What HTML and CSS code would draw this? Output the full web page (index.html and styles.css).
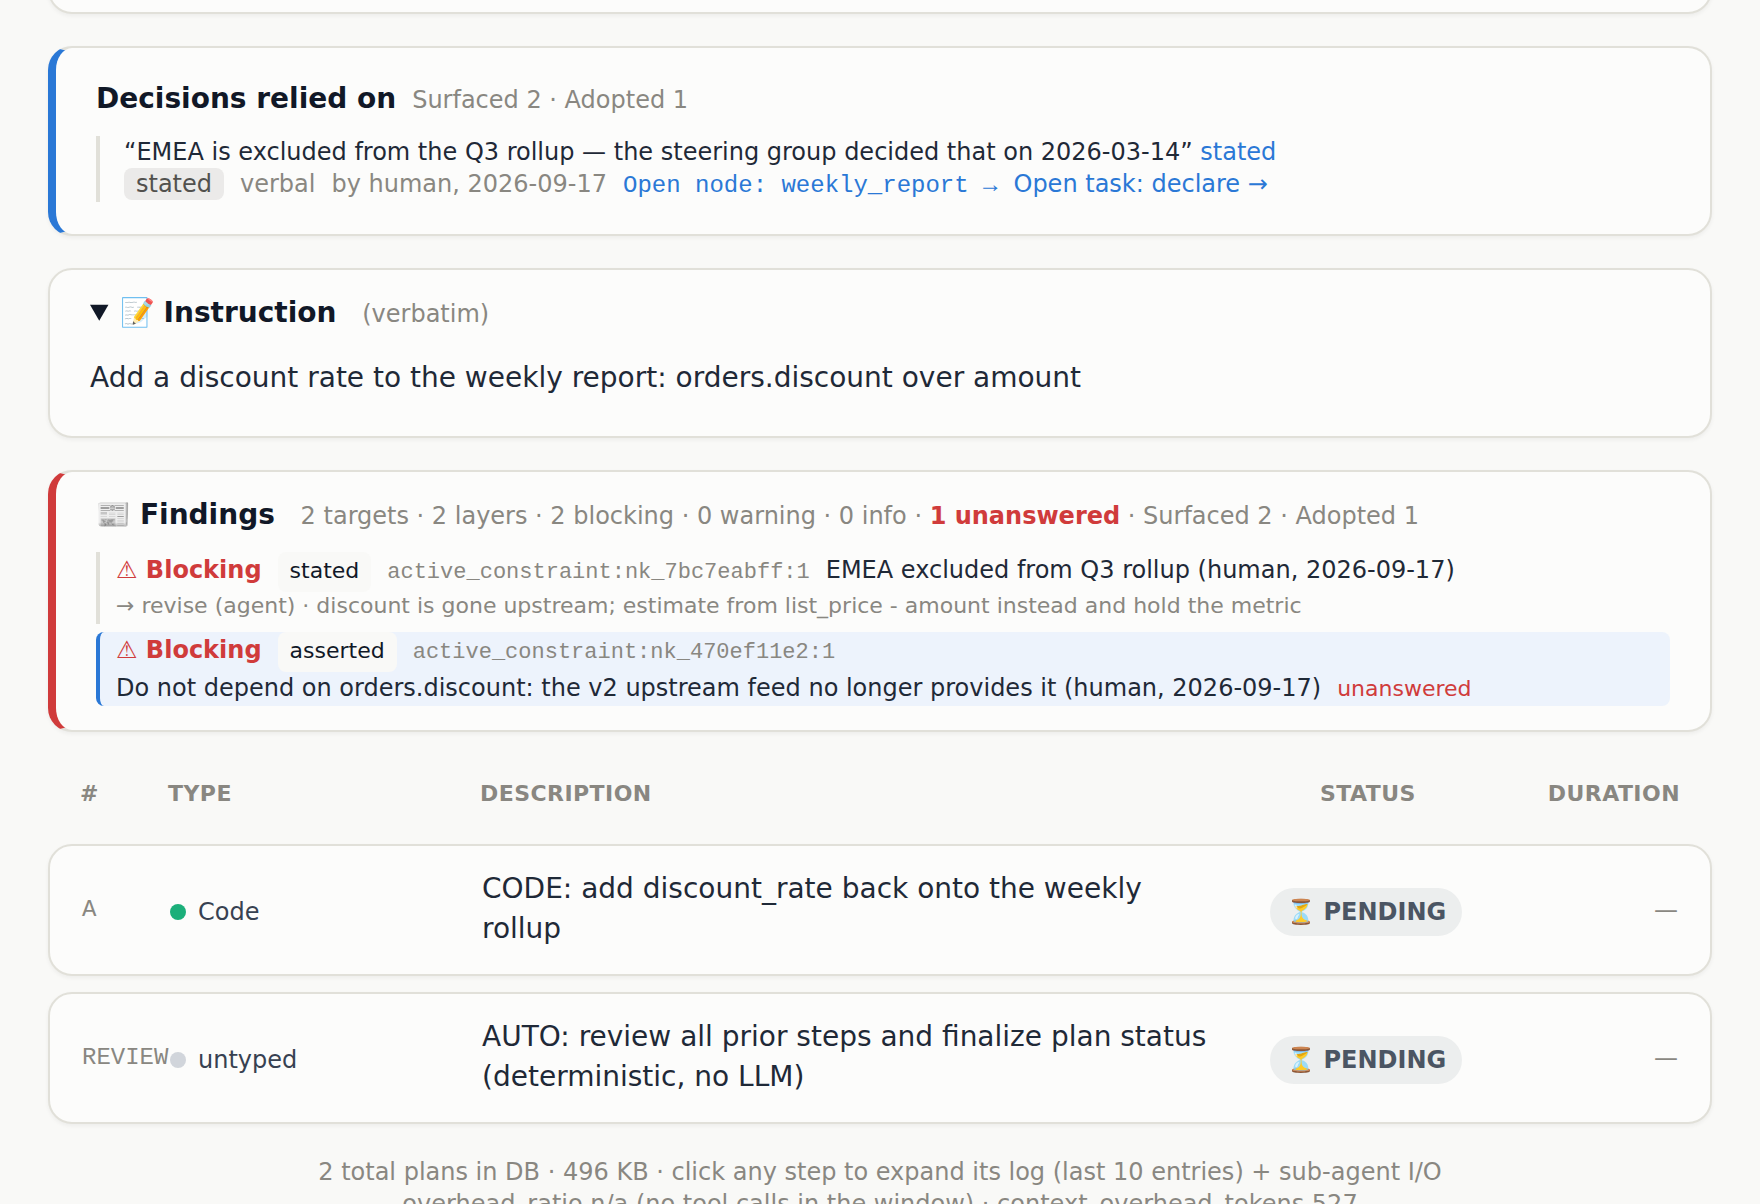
FILE: index.html
```html
<!DOCTYPE html>
<html lang="en">
<head>
<meta charset="utf-8">
<meta name="viewport" content="width=device-width, initial-scale=1">
<title>Plan</title>
<link rel="stylesheet" href="styles.css">
</head>
<body>
<main class="page">
  <section class="card card-previous"></section>

  <section class="card card-decisions">
    <header class="card-head"><h2 class="title">Decisions relied on</h2> <span class="muted head-note">Surfaced 2 · Adopted 1</span></header>
    <div class="decision">
      <p class="quote">“EMEA is excluded from the Q3 rollup — the steering group decided that on 2026-03-14” <a href="#stated">stated</a></p>
      <div class="decision-meta muted">
        <span class="tag">stated</span>
        <span>verbal</span>
        <span>by human, 2026-09-17</span>
        <a class="mono" href="#weekly_report">Open node: weekly_report →</a>
        <a href="#declare">Open task: declare →</a>
      </div>
    </div>
  </section>

  <details class="card card-instruction" open>
    <summary class="summary"><h2 class="title"><span class="emoji">📝 </span>Instruction </h2><span class="muted head-meta">(verbatim)</span></summary>
    <p class="instruction">Add a discount rate to the weekly report: orders.discount over amount</p>
  </details>

  <section class="card card-findings">
    <header class="card-head"><h2 class="title"><span class="emoji">📰 </span>Findings </h2><span class="muted head-meta">2 targets · 2 layers · 2 blocking · 0 warning · 0 info · <strong class="alert">1 unanswered</strong> · Surfaced 2 · Adopted 1</span></header>
    <ul class="findings">
      <li class="finding">
        <strong class="alert">⚠ Blocking</strong>
        <span class="level">stated</span>
        <code class="mono source">active_constraint:nk_7bc7eabff:1</code>
        <span>EMEA excluded from Q3 rollup (human, 2026-09-17)</span>
        <span class="answer">→ revise (agent) · discount is gone upstream; estimate from list_price - amount instead and hold the metric</span>
      </li>
      <li class="finding finding-open">
        <strong class="alert">⚠ Blocking</strong>
        <span class="level">asserted</span>
        <code class="mono source">active_constraint:nk_470ef11e2:1</code>
        <span>Do not depend on orders.discount: the v2 upstream feed no longer provides it (human, 2026-09-17)</span>
        <span class="alert small">unanswered</span>
      </li>
    </ul>
  </section>

  <table class="steps">
    <thead>
      <tr class="steps-head">
        <th scope="col">#</th>
        <th scope="col">TYPE</th>
        <th scope="col">DESCRIPTION</th>
        <th scope="col" class="center">STATUS</th>
        <th scope="col" class="right">DURATION</th>
      </tr>
    </thead>
    <tbody>
      <tr class="card step">
        <td class="mono muted">A</td>
        <td class="type"><span class="dot dot-code"></span>Code</td>
        <td class="description">CODE: add discount_rate back onto the weekly rollup</td>
        <td class="status center"><span class="pill"><span class="emoji">⏳ </span>PENDING</span></td>
        <td class="right muted">—</td>
      </tr>
      <tr class="card step">
        <td class="mono muted">REVIEW</td>
        <td class="type"><span class="dot"></span>untyped</td>
        <td class="description">AUTO: review all prior steps and finalize plan status (deterministic, no LLM)</td>
        <td class="status center"><span class="pill"><span class="emoji">⏳ </span>PENDING</span></td>
        <td class="right muted">—</td>
      </tr>
    </tbody>
  </table>

  <footer class="footer muted">
    <p>2 total plans in DB · 496 KB · click any step to expand its log (last 10 entries) + sub-agent I/O</p>
    <p>overhead_ratio n/a (no tool calls in the window) · context_overhead_tokens 527</p>
  </footer>
</main>
</body>
</html>
```
FILE: styles.css
```css
:root {
  --page: #f9f9f7;
  --surface: #fcfcfb;
  --line: #e1e0d9;
  --muted: #898781;
  --ink: #111827;
  --text: #1f2937;
  --blue: #2a78d6;
  --red: #d03b3b;
}

* { box-sizing: border-box; }

body {
  margin: 0;
  background: var(--page);
  color: var(--text);
  font: 24px/32px "DejaVu Sans", sans-serif;
}

h2, p, ul { margin: 0; padding: 0; }
ul { list-style: none; }
a { color: var(--blue); text-decoration: none; }

.page { padding: 0 48px; }

.card {
  border: 2px solid var(--line);
  border-radius: 24px;
  background: var(--surface);
  box-shadow: 0 2px 4px rgba(0, 0, 0, 0.05);
}

.card-previous {
  height: 64px;
  margin-top: -50px;
}

.card-decisions {
  margin-top: 32px;
  padding: 32px 40px;
  border-left: 8px solid var(--blue);
}

.card-instruction {
  margin-top: 32px;
  padding: 24px 40px 38px;
}

.card-findings {
  margin-top: 32px;
  padding: 24px 40px;
  border-left: 8px solid var(--red);
}

.card-head, .summary {
  font-size: 28px;
  line-height: 38px;
}

.card-head { margin-bottom: 18px; }

.summary {
  color: var(--ink);
  cursor: pointer;
}

.title {
  display: inline;
  color: var(--ink);
  font-size: 28px;
  font-weight: 700;
}

.head-note, .head-meta {
  font-size: 24px;
  line-height: 28px;
}

.head-note { margin-left: 7px; }
.head-meta { margin-left: 16px; }

.emoji { font-weight: 400; }
.muted { color: var(--muted); }
.mono { font-family: "Liberation Mono", monospace; }
.alert { color: var(--red); }
.small { font-size: 22px; line-height: 28px; }

.decision {
  padding: 0 0 2px 24px;
  border-left: 4px solid var(--line);
}

.decision-meta {
  display: flex;
  flex-wrap: wrap;
  align-items: baseline;
  gap: 0 16px;
}

.decision-meta .mono { line-height: 28px; }

.tag {
  padding: 0 12px;
  border-radius: 8px;
  background: #ebeae9;
  color: #52514e;
}

.instruction {
  margin-top: 26px;
  font-size: 28px;
  line-height: 40px;
}

.findings { display: grid; gap: 8px; }

.finding {
  display: flex;
  flex-wrap: wrap;
  align-items: baseline;
  gap: 0 16px;
  padding: 0 0 2px 16px;
  border-left: 4px solid var(--line);
}

.finding-open {
  border-left-color: var(--blue);
  border-radius: 8px;
  background: #edf3fc;
}

.level {
  padding: 4px 12px 6px;
  border-radius: 8px;
  background: var(--page);
  color: var(--ink);
  font-size: 22px;
  line-height: 30px;
}

.source { color: var(--muted); font-size: 22px; }

.answer {
  flex-basis: 100%;
  margin-bottom: 2px;
  color: var(--muted);
  font-size: 22px;
  line-height: 28px;
}

.steps, .steps thead, .steps tbody { display: block; }
.steps tbody { display: grid; gap: 16px; }

.steps tr {
  display: grid;
  grid-template-columns: 88px 312px 1fr 304px 160px;
  align-items: center;
}

.steps th, .steps td { padding: 0; }

.steps-head { padding: 46px 32px 34px; }

.steps th {
  color: var(--muted);
  font-size: 22px;
  letter-spacing: 0.02em;
  text-align: left;
}

.step { padding: 23px 32px 25px; }
.steps .step td { padding-top: 2px; }
.steps .step .description { padding-top: 0; }
.steps .step .type, .steps .step .status { padding-top: 6px; }

.steps .center { text-align: center; }
.steps .right { text-align: right; }

.type {
  display: flex;
  align-items: center;
  gap: 12px;
  color: #374151;
}

.dot {
  width: 16px;
  height: 16px;
  border-radius: 50%;
  background: #d1d5db;
}

.dot-code { background: #1baf7a; }

.description { font-size: 28px; line-height: 40px; }

.pill {
  display: inline-block;
  padding: 8px 16px;
  border-radius: 24px;
  background: #eceeee;
  color: #4b5563;
  font-weight: 700;
}

.footer { padding: 32px 0; text-align: center; }
```
